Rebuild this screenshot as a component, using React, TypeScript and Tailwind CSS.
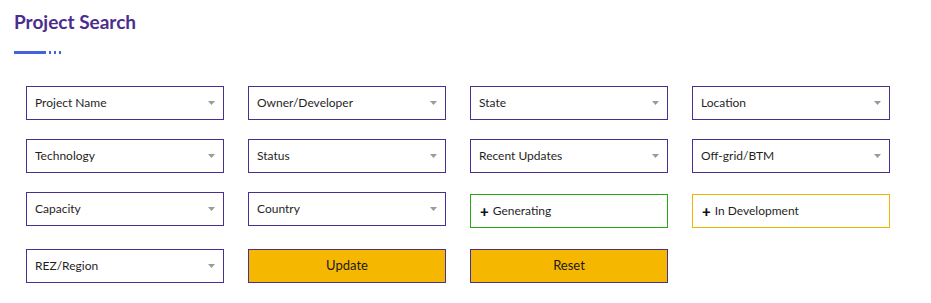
const selects = [
  'Project Name',
  'Owner/Developer',
  'State',
  'Location',
  'Technology',
  'Status',
  'Recent Updates',
  'Off-grid/BTM',
  'Capacity',
  'Country',
];

const Caret = () => (
  <svg width="7" height="4" viewBox="0 0 7 4" className="shrink-0">
    <path d="M0 0h7L3.5 4z" fill="#9a9a9a" />
  </svg>
);

const SelectBox = ({ label }: { label: string }) => (
  <div className="flex h-[34px] items-center justify-between border border-[#4b2f95] bg-white pl-[8px] pr-[8px]">
    <span className="text-[12px] text-[#1f1f1f]">{label}</span>
    <Caret />
  </div>
);

const ToggleBox = ({ label, border }: { label: string; border: string }) => (
  <div className={`mt-[2px] flex h-[34px] items-center gap-[4px] border bg-white pl-[9px] ${border}`}>
    <span className="text-[15px] font-black leading-none text-[#111]">+</span>
    <span className="text-[12px] text-[#1f1f1f]">{label}</span>
  </div>
);

export default function App() {
  return (
    <div className="min-h-[303px] w-[931px] bg-white font-['Lato',sans-serif]">
      <div className="px-[14px] pt-[10px]">
        <h1 className="text-[19px] font-bold leading-[24px] text-[#4b2d8e]">Project Search</h1>
        <div className="mt-[17px] flex items-center gap-[3px]">
          <div className="h-[3px] w-[32px] bg-[#4461e0]" />
          <div className="h-[3px] w-[2px] bg-[#4461e0]" />
          <div className="h-[3px] w-[2px] bg-[#4461e0]" />
          <div className="h-[3px] w-[2px] bg-[#4461e0]" />
        </div>
      </div>

      <div className="ml-[26px] mt-[32px] grid w-[864px] grid-cols-4 gap-x-[24px] gap-y-[19px]">
        {selects.map((s) => (
          <SelectBox key={s} label={s} />
        ))}
        <ToggleBox label="Generating" border="border-[#2aa818]" />
        <ToggleBox label="In Development" border="border-[#f5b400]" />
        <div className="mt-[2px]">
          <SelectBox label="REZ/Region" />
        </div>
        <button className="mt-[2px] h-[34px] border border-[#4b2f95] bg-[#f5b700] text-[13px] text-[#1a1a1a]">
          Update
        </button>
        <button className="mt-[2px] h-[34px] border border-[#4b2f95] bg-[#f5b700] text-[13px] text-[#1a1a1a]">
          Reset
        </button>
      </div>
    </div>
  );
}
